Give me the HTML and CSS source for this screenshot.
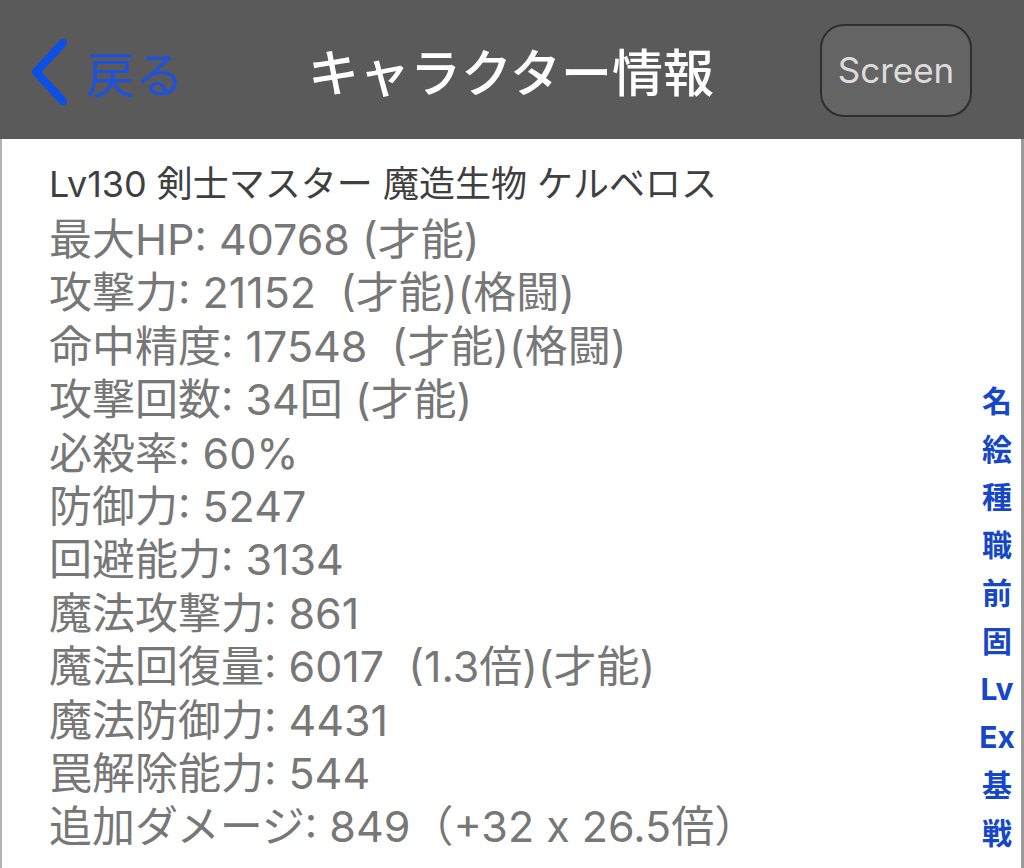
FILE: index.html
```html
<!DOCTYPE html>
<html lang="ja">
<head>
  <meta charset="UTF-8" />
  <meta name="viewport" content="width=device-width, initial-scale=1.0"/>
  <title>キャラクター情報</title>
  <link rel="stylesheet" href="styles.css">
</head>
<body>
  <!-- Navigation bar -->
  <header class="navbar">
    <a class="back" href="#">
      <svg class="chevron" width="44" height="70" viewBox="0 0 44 70">
        <path d="M35 6 L8 35 L35 64" fill="none" stroke="#0b4ee8" stroke-width="8" stroke-linecap="round" stroke-linejoin="round"/>
      </svg>
      <span class="back-label">戻る</span>
    </a>
    <h1 class="title">キャラクター情報</h1>
    <button class="screen-btn">Screen</button>
  </header>

  <!-- Character info -->
  <main class="content">
    <div class="stats">
      <div class="headline">Lv130 剣士マスター 魔造生物 ケルベロス</div>
      <div class="stat">最大HP: 40768 (才能)</div>
      <div class="stat">攻撃力: 21152&nbsp; (才能)(格闘)</div>
      <div class="stat">命中精度: 17548&nbsp; (才能)(格闘)</div>
      <div class="stat">攻撃回数: 34回 (才能)</div>
      <div class="stat">必殺率: 60%</div>
      <div class="stat">防御力: 5247</div>
      <div class="stat">回避能力: 3134</div>
      <div class="stat">魔法攻撃力: 861</div>
      <div class="stat">魔法回復量: 6017&nbsp; (1.3倍)(才能)</div>
      <div class="stat">魔法防御力: 4431</div>
      <div class="stat">罠解除能力: 544</div>
      <div class="stat">追加ダメージ: 849（+32 x 26.5倍）</div>
    </div>

    <!-- Section index -->
    <nav class="index">
      <a href="#">名</a>
      <a href="#">絵</a>
      <a href="#">種</a>
      <a href="#">職</a>
      <a href="#">前</a>
      <a href="#">固</a>
      <a href="#">Lv</a>
      <a href="#">Ex</a>
      <a href="#">基</a>
      <a href="#">戦</a>
    </nav>
  </main>
</body>
</html>
```

FILE: styles.css
```css
body {
  margin: 0;
  height: 868px;
  overflow: hidden;
  background: #ffffff;
  font-family: Inter, "Noto Sans CJK JP", sans-serif;
}

.navbar {
  height: 139px;
  background: #5a5a5a;
  display: flex;
  align-items: center;
  padding: 0 52px 0 28px;
  box-sizing: border-box;
}

.back {
  display: flex;
  align-items: center;
  gap: 14px;
  text-decoration: none;
  width: 240px;
  margin-top: 4px;
}

.back-label {
  color: #1f52d8;
  font-family: "Noto Sans CJK JP", sans-serif;
  font-size: 49px;
  line-height: 1;
}

.title {
  flex: 1;
  margin: 0 0 0 40px;
  color: #ffffff;
  font-family: "Noto Sans CJK JP", sans-serif;
  font-size: 51px;
  font-weight: 500;
}

.screen-btn {
  width: 152px;
  height: 93px;
  margin-top: 1px;
  background: #646464;
  border: 2px solid #2e2e2e;
  border-radius: 24px;
  color: #dcdcdc;
  font-family: Inter, sans-serif;
  font-size: 35px;
  padding: 0;
}

.content {
  height: 729px;
  display: flex;
  border-left: 2px solid #b4b4b4;
  border-right: 3px solid #9a9a9a;
  box-sizing: border-box;
}

.stats {
  flex: 1;
  padding: 21px 0 0 47px;
}

.headline {
  color: #3f3f3f;
  font-size: 36px;
  line-height: 48px;
  margin-bottom: 5px;
}

.stat {
  color: #777777;
  font-size: 43px;
  line-height: 53.4px;
}

.index {
  width: 48px;
  padding: 238px 0 0 0;
  display: flex;
  flex-direction: column;
  align-items: center;
}

.index a {
  color: #1547c8;
  font-size: 30px;
  font-weight: bold;
  line-height: 48px;
  text-decoration: none;
}
```
